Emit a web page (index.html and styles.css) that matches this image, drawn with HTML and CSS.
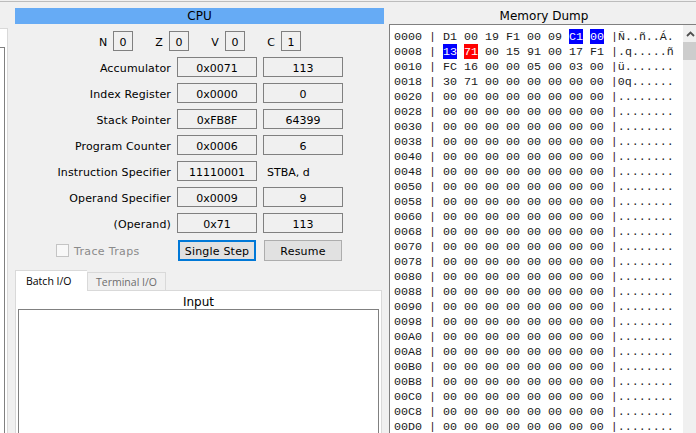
FILE: index.html
```html
<!DOCTYPE html>
<html lang="en">

<head>
    <meta charset="UTF-8">
    <title>Pep/8 CPU</title>
    <link rel="stylesheet" href="styles.css">
</head>

<body>
    <div id="app">
        <div class="side">
            <div class="pane">
                <div class="paneBox"></div>
            </div>
        </div>
        <div class="cpu">
            <div class="cpuTitle">CPU</div>
            <div class="flags">
                <span class="flagName">N</span><span class="flag">0</span>
                <span class="flagName">Z</span><span class="flag">0</span>
                <span class="flagName">V</span><span class="flag">0</span>
                <span class="flagName">C</span><span class="flag">1</span>
            </div>
            <div class="row"><label>Accumulator</label><div class="val">0x0071</div><div class="val">113</div></div>
            <div class="row"><label>Index Register</label><div class="val">0x0000</div><div class="val">0</div></div>
            <div class="row"><label>Stack Pointer</label><div class="val">0xFB8F</div><div class="val">64399</div></div>
            <div class="row"><label>Program Counter</label><div class="val">0x0006</div><div class="val">6</div></div>
            <div class="row"><label>Instruction Specifier</label><div class="val">11110001</div><div class="plain">STBA, d</div></div>
            <div class="row"><label>Operand Specifier</label><div class="val">0x0009</div><div class="val">9</div></div>
            <div class="row"><label>(Operand)</label><div class="val">0x71</div><div class="val">113</div></div>
            <div class="actions">
                <div class="trace"><span class="check"></span><span class="traceText">Trace Traps</span></div>
                <button class="btn focus">Single Step</button>
                <button class="btn">Resume</button>
            </div>
            <div class="tabs">
                <div class="tab on">Batch I/O</div>
                <div class="tab">Terminal I/O</div>
            </div>
            <div class="tabBody">
                <div class="inputTitle">Input</div>
                <div class="inputBox"></div>
            </div>
        </div>
        <div class="mem">
            <div class="memTitle">Memory Dump</div>
            <div class="memBox">
                <div id="dump"></div>
                <div class="scroll">
                    <div class="arrow">
                        <svg width="9" height="6" viewBox="0 0 9 6"><path d="M1 5 L4.5 1.5 L8 5" fill="none" stroke="#505050" stroke-width="1.8"/></svg>
                    </div>
                    <div class="thumb"></div>
                </div>
            </div>
        </div>
    </div>

    <script>
        let first = [
            ["D1", "00", "19", "F1", "00", "09", "C1", "00", "Ñ..ñ..Á."],
            ["13", "71", "00", "15", "91", "00", "17", "F1", ".q.....ñ"],
            ["FC", "16", "00", "00", "05", "00", "03", "00", "ü......."],
            ["30", "71", "00", "00", "00", "00", "00", "00", "0q......"]
        ]
        let marks = { "0-6": "blue", "0-7": "blue", "1-0": "blue", "1-1": "red" }
        let dump = document.getElementById("dump")

        for (let i = 0; i < 27; i++) {
            let addr = (i * 8).toString(16).toUpperCase().padStart(4, "0")
            let cells = first[i] || ["00", "00", "00", "00", "00", "00", "00", "00", "........"]
            let div = document.createElement("div")
            div.className = "line"
            let html = `${addr} <i>|</i> `
            for (let j = 0; j < 8; j++) {
                let mark = marks[`${i}-${j}`]
                html += mark ? `<b class="${mark}">${cells[j]}</b> ` : `${cells[j]} `
            }
            div.innerHTML = `${html}<i>|</i>${cells[8]}`
            dump.append(div)
        }
    </script>
</body>

</html>
```

FILE: styles.css
```css
* {
    box-sizing: border-box;
}

html,
body {
    margin: 0;
    height: 100%;
    overflow: hidden;
}

body {
    background: #f0f0f0;
    color: #000;
    font-family: "DejaVu Sans", "Liberation Sans", sans-serif;
    font-size: 11px;
}

#app {
    display: flex;
    height: 432px;
    margin-top: 1px;
    border-top: 1px solid #bcbcbc;
    overflow: hidden;
}

.side {
    width: 15px;
    flex: none;
    padding-top: 26px;
}

.pane {
    width: 8px;
    height: 100%;
    background: #fff;
    border-top: 1px solid #d9d9d9;
    border-right: 1px solid #d9d9d9;
    padding-top: 18px;
}

.paneBox {
    width: 5px;
    height: 100%;
    border-top: 1px solid #808080;
    border-right: 1px solid #808080;
}

.cpu {
    width: 369px;
    flex: none;
    padding-top: 6px;
}

.cpuTitle {
    height: 16px;
    line-height: 17px;
    background: #66abf5;
    text-align: center;
    font-size: 12px;
}

.flags {
    display: flex;
    align-items: center;
    padding-left: 80px;
    margin-top: 7px;
    height: 20px;
}

.flagName {
    width: 16px;
    height: 20px;
    line-height: 23px;
    text-align: center;
    margin-right: 2px;
}

.flag {
    width: 20px;
    height: 20px;
    line-height: 21px;
    border: 1px solid #808080;
    text-align: center;
    margin-right: 18px;
}

.row {
    display: flex;
    align-items: center;
    height: 20px;
    margin-top: 6px;
}

.row label {
    width: 156px;
    height: 20px;
    line-height: 23px;
    letter-spacing: 0.15px;
    text-align: right;
    margin-right: 6px;
}

.val,
.plain {
    width: 80px;
    height: 20px;
    line-height: 21px;
    margin-right: 6px;
    text-align: center;
}

.val {
    border: 1px solid #808080;
}

.plain {
    line-height: 23px;
    text-align: left;
    padding-left: 4px;
}

.actions {
    display: flex;
    align-items: center;
    margin-top: 7px;
    height: 21px;
}

.trace {
    width: 122px;
    margin-left: 41px;
    display: flex;
    align-items: center;
    color: #8a8a8a;
}

.traceText {
    line-height: 15px;
    padding-top: 1px;
    letter-spacing: 0.35px;
}

.check {
    width: 13px;
    height: 13px;
    background: #f8f8f8;
    border: 1px solid #c4c4c4;
    margin-right: 5px;
}

.btn {
    width: 78px;
    height: 21px;
    padding: 1px 0 0;
    margin-right: 8px;
    background: #e1e1e1;
    border: 1px solid #adadad;
    font: inherit;
    letter-spacing: 0.2px;
    color: #000;
}

.focus {
    border: 2px solid #0078d7;
}

.tabs {
    display: flex;
    margin-top: 9px;
    height: 20px;
    align-items: flex-end;
}

.tab {
    width: 79px;
    height: 18px;
    line-height: 18px;
    text-align: center;
    background: #f0f0f0;
    border: 1px solid #d9d9d9;
    border-bottom: none;
    color: #6d6d6d;
    font-family: "Open Sans", "Liberation Sans", sans-serif;
    font-size: 10.5px;
}

.tab.on {
    width: 72px;
    height: 21px;
    margin-bottom: -1px;
    padding-left: 10px;
    line-height: 20px;
    text-align: left;
    background: #fff;
    color: #000;
    border-right: none;
    position: relative;
}

.tabBody {
    width: 367px;
    height: 143px;
    background: #fff;
    border: 1px solid #d9d9d9;
    border-bottom: none;
    padding: 0 2px;
}

.inputTitle {
    height: 18px;
    line-height: 22px;
    text-align: center;
    font-size: 12px;
}

.inputBox {
    height: 124px;
    border: 1px solid #808080;
    border-bottom: none;
}

.mem {
    flex: 1;
    padding: 6px 0 0 5px;
    min-width: 0;
}

.memTitle {
    height: 16px;
    line-height: 17px;
    padding-left: 3px;
    text-align: center;
    font-size: 12px;
}

.memBox {
    display: flex;
    height: 409px;
    overflow: hidden;
    background: #fff;
    border-top: 1px solid #808080;
    border-left: 1px solid #808080;
}

#dump {
    flex: 1;
    padding: 4px 0 0 4px;
    font-family: "Liberation Mono", monospace;
    font-size: 11.67px;
    white-space: pre;
    color: #1a1a1a;
    overflow: hidden;
}

.line {
    height: 15px;
    line-height: 17px;
}

.line i {
    font-style: normal;
    color: #40202c;
}

.line b {
    display: inline-block;
    height: 15px;
    font-weight: normal;
    color: #fff;
}

.blue {
    background: #0000ff;
}

.red {
    background: #ff0000;
}

.scroll {
    width: 13px;
    flex: none;
    background: #f0f0f0;
}

.arrow {
    height: 17px;
    padding-left: 3px;
    display: flex;
    align-items: center;
}

.thumb {
    height: 18px;
    background: #cdcdcd;
}
```
